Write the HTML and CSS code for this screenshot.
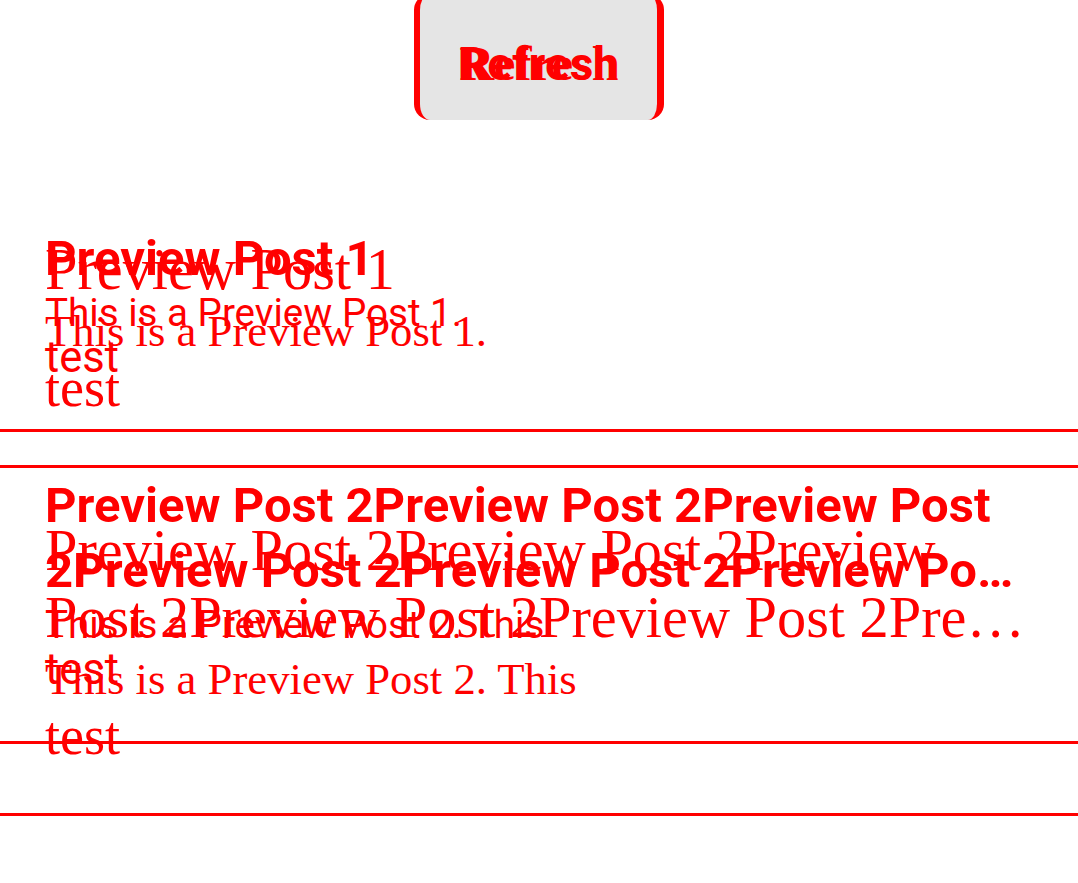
FILE: index.html
```html
<!DOCTYPE html>
<html lang="en">
<head>
<meta charset="utf-8">
<title>Preview Posts</title>
<link rel="stylesheet" href="styles.css">
</head>
<body>
<div class="stage">
  <div class="layer layer-sans">
    <header class="hdr">
      <button class="btn btn-sans" type="button">Refresh</button>
    </header>
    <ul class="posts posts-sans">
      <li class="post post-sans">
        <h2 class="title title-sans"><span class="title-line title-last">Preview Post 1</span></h2>
        <p class="desc desc-sans">This is a Preview Post 1.</p>
        <p class="tag tag-sans">test</p>
      </li>
      <li class="post post-sans">
        <h2 class="title title-sans"><span class="title-line">Preview Post 2Preview Post 2Preview Post</span><span class="title-line title-last">2Preview Post 2Preview Post 2Preview Post 2Preview Post 2Preview Post 2Preview Post 2Preview Post 2</span></h2>
        <p class="desc desc-sans">This is a Preview Post 2. This</p>
        <p class="tag tag-sans">test</p>
      </li>
    </ul>
  </div>
  <div class="layer layer-serif">
    <header class="hdr">
      <button class="btn btn-serif" type="button">Refresh</button>
    </header>
    <ul class="posts posts-serif">
      <li class="post post-serif">
        <h2 class="title title-serif"><span class="title-line title-last">Preview Post 1</span></h2>
        <p class="desc desc-serif">This is a Preview Post 1.</p>
        <p class="tag tag-serif">test</p>
      </li>
      <li class="post post-serif">
        <h2 class="title title-serif"><span class="title-line">Preview Post 2Preview Post 2Preview</span><span class="title-line title-last">Post 2Preview Post 2Preview Post 2Preview Post 2Preview Post 2Preview Post 2Preview Post 2Preview Post 2</span></h2>
        <p class="desc desc-serif">This is a Preview Post 2. This</p>
        <p class="tag tag-serif">test</p>
      </li>
    </ul>
  </div>
</div>
</body>
</html>
```

FILE: styles.css
```css
* {
  box-sizing: border-box;
  margin: 0;
  padding: 0;
}

html, body {
  background: #ffffff;
}

body {
  margin: 0;
  color: #ff0000;
  overflow: hidden;
}

.stage {
  position: relative;
  width: 1078px;
  height: 883px;
  overflow: hidden;
}

.layer {
  width: 100%;
}

.layer-sans {
  font-family: Roboto, "Liberation Sans", sans-serif;
}

.layer-serif {
  position: absolute;
  top: 0;
  left: 0;
  right: 0;
  font-family: "Liberation Serif", "Times New Roman", serif;
}

.hdr {
  height: 120px;
  display: flex;
  justify-content: center;
  align-items: flex-start;
}

.btn {
  width: 250px;
  height: 126px;
  margin-top: -6px;
  padding: 43px 0 29px;
  border-radius: 16px;
  color: #ff0000;
  font-weight: 700;
  line-height: 54px;
  text-align: center;
  cursor: pointer;
}

.btn-sans {
  font-family: Roboto, "Liberation Sans", sans-serif;
  font-size: 46px;
  background: #e5e5e5;
  border: 0;
  border-left: 6px solid #ff0000;
  border-right: 7px solid #ff0000;
}

.btn-serif {
  font-family: "Liberation Serif", "Times New Roman", serif;
  font-size: 48px;
  background: transparent;
  border: 0;
}

.posts {
  list-style: none;
}

.posts-sans {
  margin-top: 65px;
}

.posts-serif {
  margin-top: 67px;
}

.post {
  display: flex;
  flex-direction: column;
  padding-left: 45px;
  padding-right: 45px;
  border-bottom: 3px solid #ff0000;
}

.post-sans {
  padding-top: 41px;
  padding-bottom: 49px;
}

.post-serif {
  padding-top: 49px;
  padding-bottom: 48px;
}

.title {
  display: flex;
  flex-direction: column;
}

.title-line {
  display: block;
}

.title-last {
  white-space: nowrap;
  overflow: hidden;
  text-overflow: ellipsis;
}

.title-sans {
  font-size: 49px;
  font-weight: 700;
  line-height: 65px;
}

.title-serif {
  font-size: 58.3px;
  font-weight: 400;
  line-height: 67px;
}

.desc-sans {
  font-size: 38.6px;
  line-height: 44px;
}

.tag-sans {
  margin-top: 1px;
  font-size: 43.5px;
  line-height: 44px;
}

.desc-serif {
  font-size: 44.7px;
  line-height: 57px;
}

.tag-serif {
  font-size: 54px;
  line-height: 57px;
}
```
